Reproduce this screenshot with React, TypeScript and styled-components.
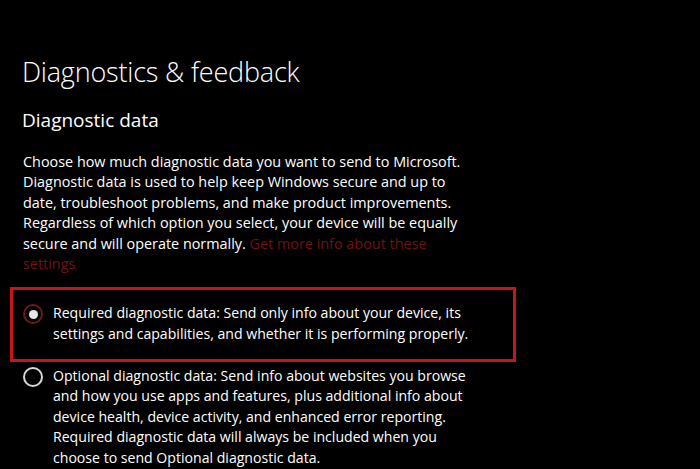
import React from 'react';
import styled, { createGlobalStyle } from 'styled-components';

const GlobalStyle = createGlobalStyle`
  html, body {
    margin: 0;
    padding: 0;
    background: #000;
  }
  body {
    font-family: "Open Sans", "Noto Sans", sans-serif;
    color: #fff;
  }
`;

const Page = styled.div`
  width: 700px;
  height: 469px;
  overflow: hidden;
  background: #000;
  padding: 54px 0 0 22px;
  box-sizing: border-box;
`;

const Title = styled.h1`
  margin: 0;
  font-size: 27px;
  font-weight: 300;
  line-height: 36px;
  letter-spacing: -0.2px;
`;

const Subtitle = styled.h2`
  margin: 17px 0 0;
  font-size: 19px;
  font-weight: 400;
  line-height: 26px;
`;

const Description = styled.p`
  margin: 19px 0 0 1px;
  width: 440px;
  font-size: 14.4px;
  line-height: 20.4px;
`;

const Link = styled.a`
  color: #6e1219;
  text-decoration: none;
`;

const Options = styled.div`
  margin: 13px 0 0 -12px;
  display: flex;
  flex-direction: column;
`;

const Option = styled.label<{ $highlighted?: boolean }>`
  display: flex;
  align-items: flex-start;
  gap: 10px;
  width: 506px;
  box-sizing: border-box;
  padding: ${p => (p.$highlighted ? '13px 0 14px 10px' : '4px 0 0 13px')};
  border: ${p => (p.$highlighted ? '3px solid #c4161c' : 'none')};
  font-size: 14.1px;
  line-height: 20.6px;
`;

const Radio = styled.span<{ $checked?: boolean }>`
  flex: none;
  width: 20px;
  height: 20px;
  margin-top: 1px;
  box-sizing: border-box;
  border-radius: 50%;
  border: 2px solid ${p => (p.$checked ? '#6a1a20' : '#d8d8d8')};
  display: flex;
  align-items: center;
  justify-content: center;

  &::after {
    content: '';
    display: ${p => (p.$checked ? 'block' : 'none')};
    width: 9px;
    height: 9px;
    border-radius: 50%;
    background: #e6e6e6;
  }
`;

const OptionText = styled.span`
  width: 420px;
`;

export default function App() {
  return (
    <>
      <GlobalStyle />
      <Page>
        <Title>Diagnostics &amp; feedback</Title>
        <Subtitle>Diagnostic data</Subtitle>
        <Description>
          Choose how much diagnostic data you want to send to Microsoft.
          Diagnostic data is used to help keep Windows secure and up to date,
          troubleshoot problems, and make product improvements. Regardless of
          which option you select, your device will be equally secure and will
          operate normally. <Link href="#">Get more info about these settings</Link>
        </Description>
        <Options>
          <Option $highlighted>
            <Radio $checked />
            <OptionText>
              Required diagnostic data: Send only info about your device, its
              settings and capabilities, and whether it is performing properly.
            </OptionText>
          </Option>
          <Option>
            <Radio />
            <OptionText>
              Optional diagnostic data: Send info about websites you browse and
              how you use apps and features, plus additional info about device
              health, device activity, and enhanced error reporting. Required
              diagnostic data will always be included when you choose to send
              Optional diagnostic data.
            </OptionText>
          </Option>
        </Options>
      </Page>
    </>
  );
}
